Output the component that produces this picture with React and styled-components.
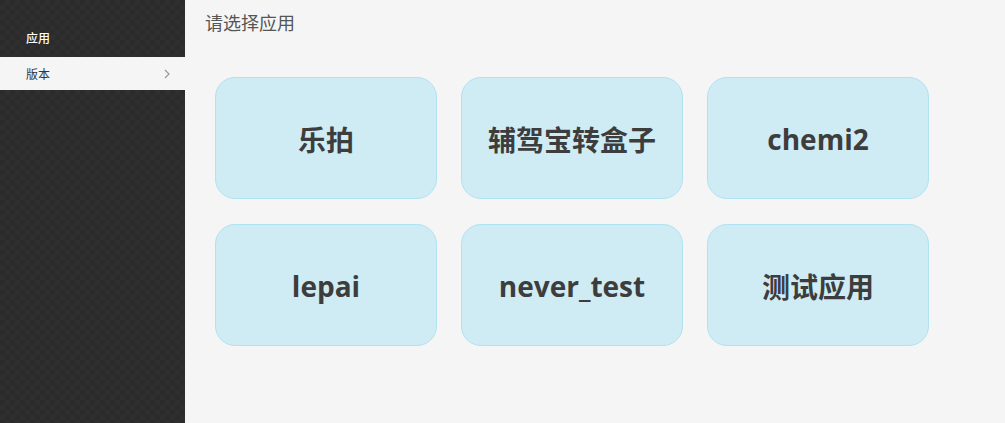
import React from 'react';
import styled, { createGlobalStyle } from 'styled-components';

const GlobalStyle = createGlobalStyle`
html, body {
    margin: 0;
    padding: 0;
    background: #f5f5f5;
    font-family: 'Noto Sans', 'Noto Sans CJK SC', sans-serif;
}
`

const Layout = styled.div`
display: flex;
width: 1005px;
height: 423px;
overflow: hidden;
`

const Sidebar = styled.aside`
width: 185px;
flex-shrink: 0;
padding-top: 28px;
background-color: #2b2b2b;
background-image:
    linear-gradient(45deg, #2f2f2f 25%, transparent 25%, transparent 75%, #2f2f2f 75%),
    linear-gradient(45deg, #2f2f2f 25%, transparent 25%, transparent 75%, #2f2f2f 75%);
background-size: 10px 10px;
background-position: 0 0, 5px 5px;
`

const GroupTitle = styled.div`
height: 20px;
line-height: 20px;
padding-left: 26px;
margin-bottom: 9px;
font-size: 12px;
font-weight: 500;
color: #ffffff;
font-family: 'Noto Sans CJK SC', sans-serif;
`

const MenuItem = styled.div`
display: flex;
align-items: center;
justify-content: space-between;
height: 33px;
padding: 0 15px 0 26px;
font-size: 12px;
color: #333;
font-family: 'Noto Sans CJK SC', sans-serif;
background: ${props => props.active ? '#f5f5f5' : 'transparent'};
cursor: pointer;
`

const Main = styled.main`
flex: 1;
padding: 8px 0 0 20px;
background: #f5f5f5;
`

const Title = styled.h1`
margin: 0;
font-size: 18px;
font-weight: 400;
line-height: 28px;
color: #555;
font-family: 'Noto Sans CJK SC', sans-serif;
`

const Grid = styled.div`
display: grid;
grid-template-columns: repeat(3, 222px);
grid-auto-rows: 122px;
column-gap: 24px;
row-gap: 25px;
margin: 41px 0 0 10px;
`

const Card = styled.div`
display: flex;
align-items: center;
justify-content: center;
box-sizing: border-box;
background: #cfecf4;
border: 1px solid #b0e2f2;
border-radius: 20px;
font-size: 28px;
font-weight: 700;
color: #3d3d3d;
font-family: 'Open Sans', 'Noto Sans CJK SC', sans-serif;
cursor: pointer;
padding-top: 2px;
`

const apps = ['乐拍', '辅驾宝转盒子', 'chemi2', 'lepai', 'never_test', '测试应用'];

function Chevron(){
    return (
        <svg width="6" height="10" viewBox="0 0 6 10">
            <path d="M1 1 L5 5 L1 9" fill="none" stroke="#999" strokeWidth="1.2"/>
        </svg>
    )
}

export default function App(){
    return(
        <>
        <GlobalStyle/>
        <Layout>
            <Sidebar>
                <GroupTitle>应用</GroupTitle>
                <MenuItem active>
                    <span>版本</span>
                    <Chevron/>
                </MenuItem>
            </Sidebar>
            <Main>
                <Title>请选择应用</Title>
                <Grid>
                    {apps.map(name => (
                        <Card key={name}>{name}</Card>
                    ))}
                </Grid>
            </Main>
        </Layout>
        </>
    )
}
